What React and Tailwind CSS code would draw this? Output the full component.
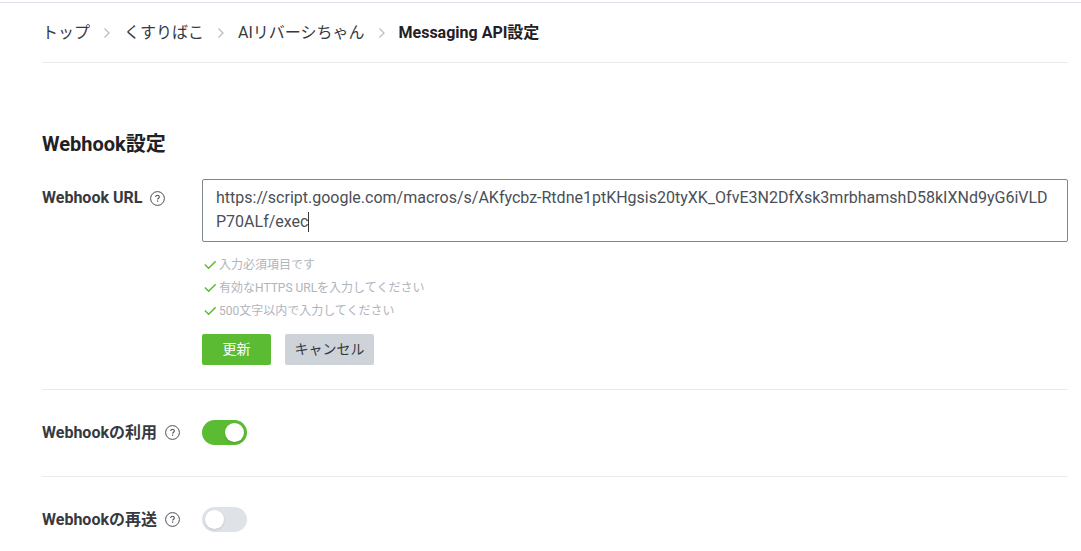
import { useState } from "react";

const crumbs = ["トップ", "くすりばこ", "AIリバーシちゃん"];

const rules = [
  "入力必須項目です",
  "有効なHTTPS URLを入力してください",
  "500文字以内で入力してください",
];

const initialUrl =
  "https://script.google.com/macros/s/AKfycbz-Rtdne1ptKHgsis20tyXK_OfvE3N2DfXsk3mrbhamshD58kIXNd9yG6iVLDP70ALf/exec";

function Chevron() {
  return (
    <svg
      className="h-3 w-2 shrink-0"
      viewBox="0 0 8 12"
      fill="none"
      stroke="#b7bbc2"
      strokeWidth="1.2"
      aria-hidden="true"
    >
      <path d="M1.5 1.5 6 6l-4.5 4.5" />
    </svg>
  );
}

function Check() {
  return (
    <svg
      className="h-3 w-3 shrink-0"
      viewBox="0 0 12 12"
      fill="none"
      stroke="#5bbb32"
      strokeWidth="1.4"
      aria-hidden="true"
    >
      <path d="M.9 4.6 4.6 8.3 11.6 1.3" />
    </svg>
  );
}

function HelpButton({ label }) {
  return (
    <button type="button" aria-label={label} className="shrink-0">
      <svg
        className="h-[15px] w-[15px]"
        viewBox="0 0 15 15"
        fill="none"
        stroke="#4a4f55"
        aria-hidden="true"
      >
        <circle cx="7.5" cy="7.5" r="6.9" strokeWidth="1" />
        <path
          d="M5.7 6.1c0-1.1.7-1.8 1.8-1.8s1.8.7 1.8 1.6c0 1.3-1.7 1.4-1.7 2.7"
          strokeWidth="1.1"
        />
        <path d="M7.6 9.6v1.2" strokeWidth="1.2" />
      </svg>
    </button>
  );
}

function ToggleRow({ id, label, checked, onChange }) {
  return (
    <div className="flex items-center border-t border-[#ebebed] pt-[30px] pb-[31px]">
      <div className="flex w-40 shrink-0 items-center gap-2">
        <label htmlFor={id} className="font-bold text-[#36393f]">
          {label}
        </label>
        <HelpButton label={`${label}について`} />
      </div>
      <input
        id={id}
        type="checkbox"
        role="switch"
        checked={checked}
        onChange={(e) => onChange(e.target.checked)}
        className="flex h-[25px] w-[45px] cursor-pointer appearance-none items-center rounded-full bg-[#dfe3e8] px-[3px] before:size-[19px] before:rounded-full before:bg-white before:shadow-sm before:content-[''] checked:justify-end checked:bg-[#5bbb32]"
      />
    </div>
  );
}

function App() {
  const [url, setUrl] = useState(initialUrl);
  const [enabled, setEnabled] = useState(true);
  const [resend, setResend] = useState(false);

  return (
    <div className="bg-white pt-[2px] font-['Roboto','Noto_Sans_CJK_JP',sans-serif] text-base leading-6 text-[#36393f]">
      <div className="border-t border-[#dfdfe8] pr-[13px] pl-[42px]">
        <nav
          aria-label="breadcrumb"
          className="border-b border-[#ebebed] pt-[18px] pb-[17px]"
        >
          <ol className="flex items-center gap-[13px]">
            {crumbs.map((crumb) => (
              <li key={crumb} className="flex items-center gap-[13px]">
                <a href="#">{crumb}</a>
                <Chevron />
              </li>
            ))}
            <li aria-current="page" className="font-bold text-[#1f2124]">
              Messaging API設定
            </li>
          </ol>
        </nav>

        <main className="pt-[67px]">
          <h2 className="text-xl leading-7 font-bold text-[#1f2124]">
            Webhook設定
          </h2>

          <form
            className="flex pt-[21px] pb-6"
            onSubmit={(e) => e.preventDefault()}
          >
            <div className="flex w-40 shrink-0 items-center gap-2 self-start pt-[7px]">
              <label htmlFor="webhook-url" className="font-bold">
                Webhook URL
              </label>
              <HelpButton label="Webhook URLについて" />
            </div>

            <div className="min-w-0 flex-1">
              <div className="relative">
                <textarea
                  id="webhook-url"
                  rows={2}
                  spellCheck={false}
                  value={url}
                  onChange={(e) => setUrl(e.target.value)}
                  className="block h-[63px] w-full resize-none overflow-hidden rounded-xs border border-[#7d858d] px-[13px] py-[6px] break-all text-[#4a4f57] caret-transparent outline-none"
                />
                {/* text cursor */}
                <span className="pointer-events-none absolute top-[33px] left-[106px] h-5 w-px bg-[#36393f]" />
              </div>

              <ul className="mt-3 ml-[2px] text-xs leading-[23px] text-[#b0b4bb]">
                {rules.map((rule) => (
                  <li key={rule} className="flex items-center gap-[3px]">
                    <Check />
                    {rule}
                  </li>
                ))}
              </ul>

              <div className="mt-[11px] flex gap-[14px] text-sm leading-[31px]">
                <button
                  type="submit"
                  className="w-[69px] rounded-xs bg-[#5bbb32] text-center text-white"
                >
                  更新
                </button>
                <button
                  type="button"
                  className="w-[89px] rounded-xs bg-[#ced2d9] text-center"
                >
                  キャンセル
                </button>
              </div>
            </div>
          </form>

          <ToggleRow
            id="use-webhook"
            label="Webhookの利用"
            checked={enabled}
            onChange={setEnabled}
          />
          <ToggleRow
            id="resend-webhook"
            label="Webhookの再送"
            checked={resend}
            onChange={setResend}
          />
        </main>
      </div>
    </div>
  );
}

export default App;
